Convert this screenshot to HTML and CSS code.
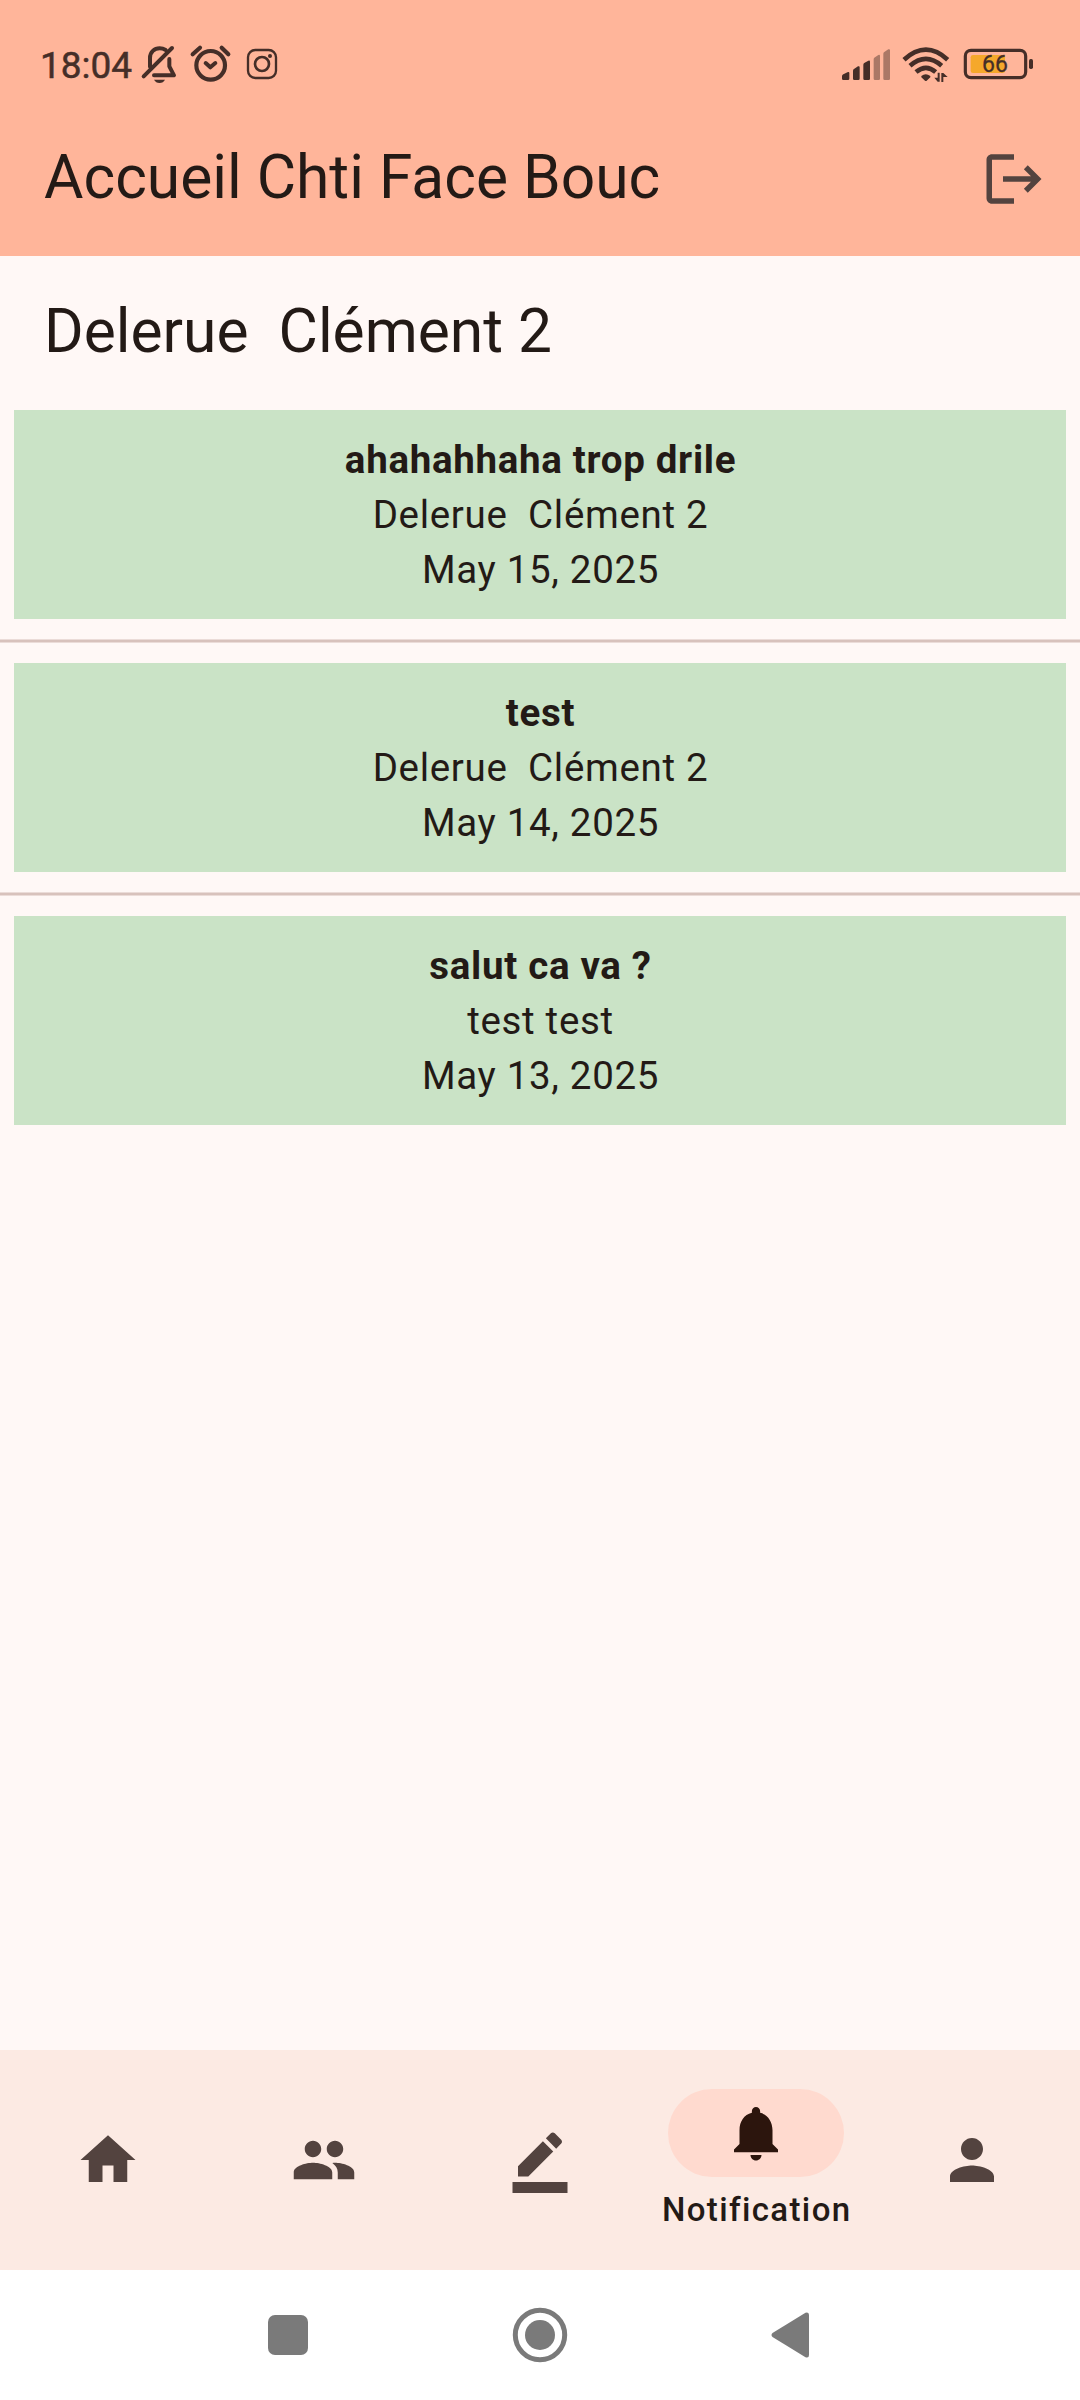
FILE: index.html
```html
<!DOCTYPE html>
<html lang="fr">
<head>
<meta charset="utf-8">
<meta name="viewport" content="width=device-width">
<title>Accueil Chti Face Bouc</title>
<link rel="stylesheet" href="styles.css">
</head>
<body>
<div class="screen">
  <header class="top">
    <div class="status">
      <div class="status-left">
        <span class="time">18:04</span>
        <svg width="168" height="70" viewBox="336 0 504 210">
          <g fill="none" stroke="currentColor" stroke-width="12" stroke-linecap="round" stroke-linejoin="round">
            <path d="M371 139 456 54"/>
            <path d="M390 110V84c0-18 13-29 29-29 8 0 13 2 18 5"/>
            <path d="M448 87v22l14 27h-60"/>
            <circle cx="572" cy="106" r="43" stroke-width="12.500"/>
            <path d="M557 99l14 13 15-13"/>
            <path d="M518 73l22-20M605 53l20 20" stroke-width="12.500"/>
            <rect x="684" y="60" width="84" height="84" rx="22" stroke-width="7"/>
            <circle cx="726" cy="102" r="21" stroke-width="8"/>
          </g>
          <path d="M402 149h33c-3 6-9 10-16.500 10s-13-4-16.500-10z" fill="currentColor"/>
          <circle cx="750" cy="78" r="6" fill="currentColor"/>
        </svg>
      </div>
      <div class="battery">
        <svg width="240" height="70" viewBox="0 0 720 210">
          <g fill="currentColor">
            <path d="M66 139q0-4 4-6l14-7q4-1 4 3v17q0 4-4 4H70q-4 0-4-4z"/>
            <path d="M99 122q0-4 4-6l11-7q5-2 5 3v34q0 4-4 4h-12q-4 0-4-4z"/>
            <path d="M130 104q0-4 4-6l11-6q5-2 5 3v51q0 4-4 4h-12q-4 0-4-4z"/>
            <path opacity=".45" d="M161 88q0-4 4-6l10-7q5-2 5 3v68q0 4-4 4h-11q-4 0-4-4z"/>
            <path opacity=".45" d="M190 71q0-4 4-6l11-7q5-2 5 3v85q0 4-4 4h-12q-4 0-4-4z"/>
            <path d="M304 138q13-11 27 0v4l-11 10q-2 2-5 0l-11-10z"/>
            <path d="M359 128v27h-6l-10-12h10v-15zM364 156v-27h6l13 12h-13v15z"/>
            <rect x="627" y="87" width="12" height="30" rx="5"/>
          </g>
          <g fill="none" stroke="currentColor" stroke-width="14">
            <path d="M252 89Q318 29 383 89"/>
            <path d="M270 107Q318 66 365 107"/>
            <path d="M288 126Q318 101 347 126"/>
          </g>
          <rect x="452" y="75" width="103" height="54" rx="7" fill="#f5a82b"/>
          <rect x="436" y="61" width="181" height="82" rx="17" fill="none" stroke="currentColor" stroke-width="9.500"/>
        </svg>
        <span class="percent">66</span>
      </div>
    </div>
    <div class="appbar">
      <h1 class="title">Accueil Chti Face Bouc</h1>
      <svg class="icon" viewBox="0 0 24 24"><path d="M17 7l-1.410 1.410L18.170 11H8v2h10.170l-2.580 2.580L17 17l5-5zM4 5h8V3H4c-1.100 0-2 .9-2 2v14c0 1.100.9 2 2 2h8v-2H4V5z"/></svg>
    </div>
  </header>

  <main class="content">
    <h2 class="title user">Delerue&nbsp; Clément 2</h2>
    <article class="card">
      <strong>ahahahhaha trop drile</strong>
      <span>Delerue&nbsp; Clément 2</span>
      <time>May 15, 2025</time>
    </article>
    <div class="divider"></div>
    <article class="card">
      <strong>test</strong>
      <span>Delerue&nbsp; Clément 2</span>
      <time>May 14, 2025</time>
    </article>
    <div class="divider"></div>
    <article class="card">
      <strong>salut ca va ?</strong>
      <span>test test</span>
      <time>May 13, 2025</time>
    </article>
  </main>

  <nav class="tabs">
    <div class="tab"><svg class="icon" viewBox="0 0 24 24"><path d="M10 20v-6h4v6h5v-8h3L12 3 2 12h3v8z"/></svg></div>
    <div class="tab"><svg class="icon" viewBox="0 0 24 24"><path d="M16 11c1.660 0 2.990-1.340 2.990-3S17.660 5 16 5s-3 1.340-3 3 1.340 3 3 3zm-8 0c1.660 0 2.990-1.340 2.990-3S9.660 5 8 5 5 6.340 5 8s1.340 3 3 3zm0 2c-2.330 0-7 1.170-7 3.500V19h14v-2.500c0-2.330-4.670-3.500-7-3.500zm8 0c-.29 0-.62.020-.97.050 1.160.84 1.970 1.970 1.970 3.450V19h6v-2.500c0-2.330-4.670-3.500-7-3.500z"/></svg></div>
    <div class="tab"><svg class="icon" viewBox="0 0 24 24"><path d="M22 24H2v-4h20v4zM13.060 5.190l3.750 3.750L7.750 18H4v-3.750l9.060-9.060zm4.820 2.680l-3.750-3.750 1.830-1.830c.39-.39 1.020-.39 1.410 0l2.340 2.340c.39.39.39 1.020 0 1.410l-1.830 1.830z"/></svg></div>
    <div class="tab active">
      <div class="pill"><svg class="icon" viewBox="0 0 24 24"><path d="M12 22c1.100 0 2-.9 2-2h-4c0 1.100.89 2 2 2zm6-6v-5c0-3.070-1.640-5.640-4.500-6.320V4c0-.83-.67-1.500-1.500-1.500s-1.500.67-1.500 1.500v.68C7.630 5.360 6 7.920 6 11v5l-2 2v1h16v-1l-2-2z"/></svg></div>
      <span class="label">Notification</span>
    </div>
    <div class="tab"><svg class="icon" viewBox="0 0 24 24"><path d="M12 12c2.210 0 4-1.790 4-4s-1.790-4-4-4-4 1.790-4 4 1.790 4 4 4zm0 2c-2.670 0-8 1.340-8 4v2h16v-2c0-2.660-5.330-4-8-4z"/></svg></div>
  </nav>

  <div class="system">
    <svg width="60" height="60" viewBox="0 0 60 60"><rect x="10" y="10" width="40" height="40" rx="7"/></svg>
    <svg width="60" height="60" viewBox="0 0 60 60"><circle cx="30" cy="30" r="24.700" fill="none" stroke="#7a7a7a" stroke-width="5"/><circle cx="30" cy="30" r="15"/></svg>
    <svg width="60" height="60" viewBox="2 0 60 60"><path d="M12.500 28 45.500 7.700Q49 6.500 49 10V50Q49 53.500 45.500 52.300L12.500 32Q10.500 30 12.500 28z"/></svg>
  </div>
</div>
</body>
</html>
```
FILE: styles.css
```css
* { box-sizing: border-box; }

body {
  margin: 0;
  font-family: Roboto, sans-serif;
  color: #231a16;
  background: #fff8f6;
}

svg { display: block; flex: none; }

.screen {
  width: 1080px;
  height: 2400px;
  display: flex;
  flex-direction: column;
}

.top {
  height: 256px;
  background: #ffb59a;
}

.status {
  height: 102px;
  padding: 30px 20px 0;
  display: flex;
  justify-content: space-between;
  color: #452e28;
}

.status-left {
  display: flex;
  padding-left: 20px;
}

.time {
  width: 92px;
  font-size: 37px;
  line-height: 72px;
  white-space: nowrap;
  -webkit-text-stroke: .5px currentColor;
}

.battery {
  position: relative;
}

.percent {
  position: absolute;
  left: 147px;
  top: 20px;
  width: 56px;
  text-align: center;
  font-size: 23px;
  line-height: 30px;
  -webkit-text-stroke: .3px currentColor;
}

.appbar {
  height: 154px;
  padding: 0 33px 0 44px;
  display: flex;
  align-items: center;
  justify-content: space-between;
}

.title {
  margin: 0;
  font-size: 60.5px;
  line-height: 77px;
  font-weight: 400;
}

.appbar .title { padding-bottom: 3px; }

.content {
  flex: 1;
}

.user {
  height: 154px;
  padding: 37px 44px 0;
}

.icon {
  width: 66px;
  height: 66px;
  fill: #53433f;
}

.card {
  height: 209px;
  margin: 0 14px;
  padding: 22px 0 22px 1px;
  display: flex;
  flex-direction: column;
  align-items: center;
  background: #cae3c6;
  font-size: 38.5px;
  line-height: 55px;
  letter-spacing: .6875px;
}

.divider {
  height: 4px;
  margin: 20px 0;
  background: #d8c2bc;
  border: solid #ebdcd8;
  border-width: 1px 0;
}

.tabs {
  height: 220px;
  display: grid;
  grid-template-columns: repeat(5, 1fr);
  background: #fceae3;
}

.tab {
  display: flex;
  flex-direction: column;
  align-items: center;
  justify-content: center;
  gap: 11px;
}

.pill {
  width: 176px;
  height: 88px;
  border-radius: 44px;
  display: grid;
  place-items: center;
  background: #ffdacf;
}

.pill .icon { fill: #2c150d; }

.label {
  padding-left: 1.375px;
  font-size: 33px;
  line-height: 44px;
  font-weight: 500;
  letter-spacing: 1.375px;
}

.system {
  height: 130px;
  padding: 0 258px;
  display: flex;
  align-items: center;
  justify-content: space-between;
  background: #fff;
  fill: #7a7a7a;
}
```
